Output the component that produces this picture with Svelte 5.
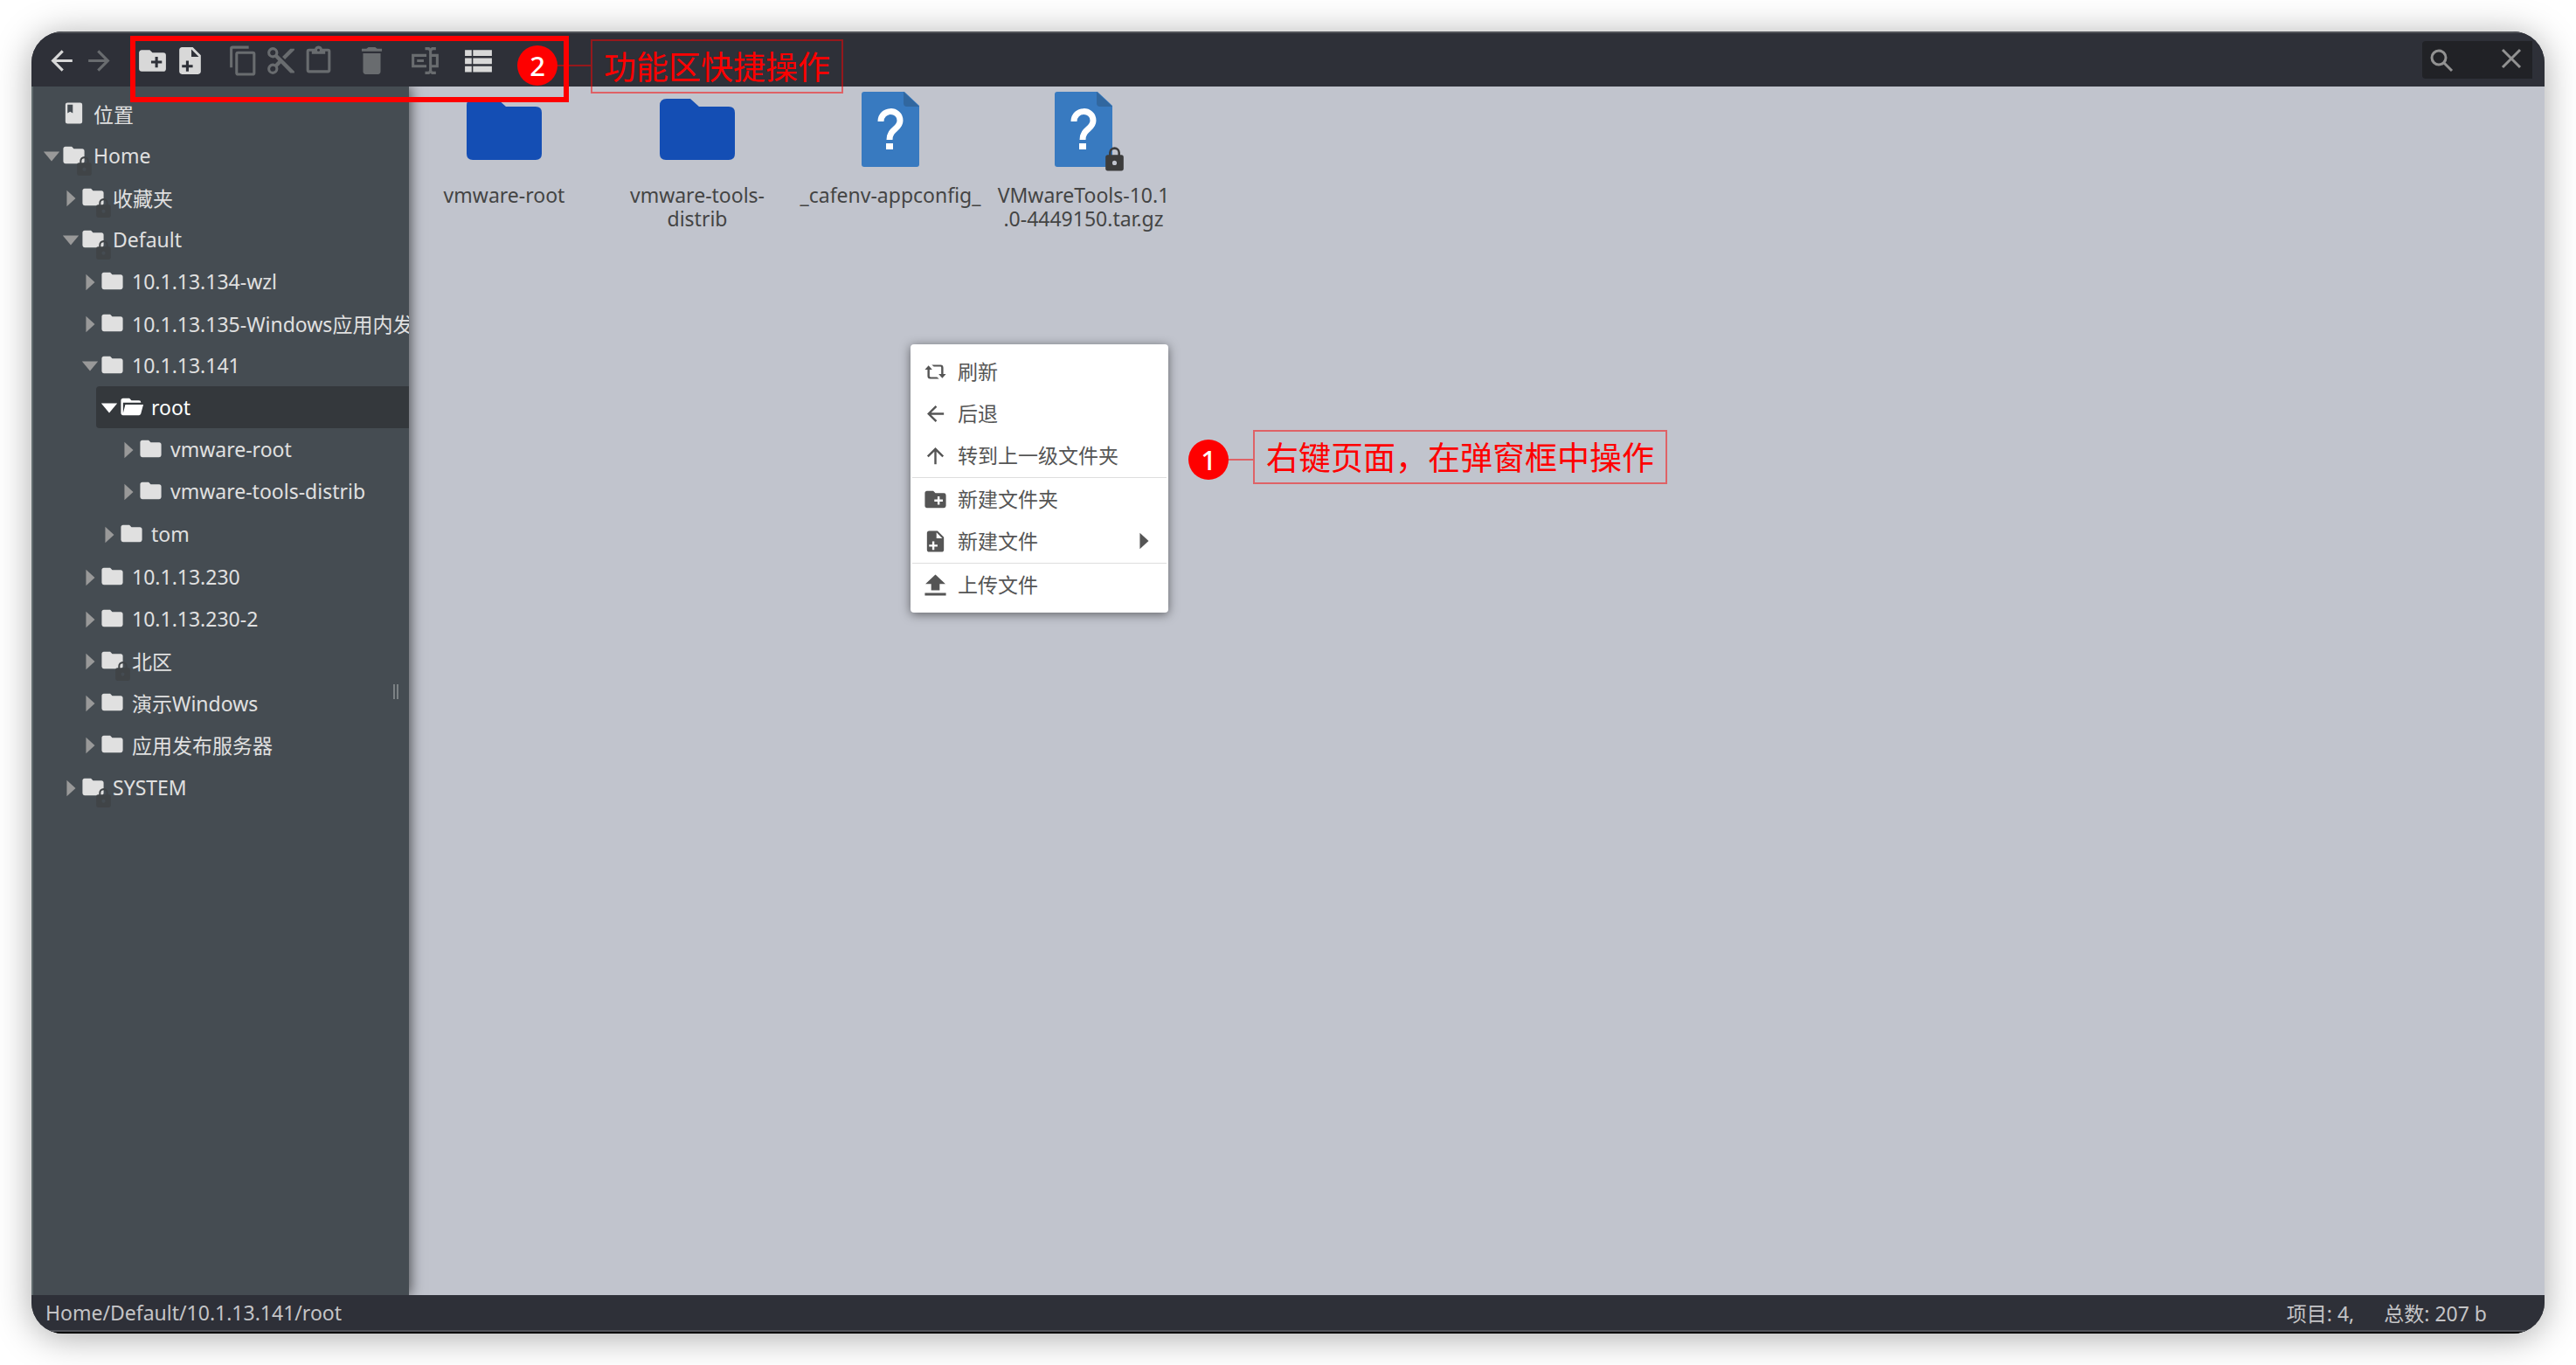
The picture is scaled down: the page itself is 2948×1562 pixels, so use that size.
<script>
  const icons = {
    back: 'M20 11V13H8L13.5 18.5L12.08 19.92L4.16 12L12.08 4.08L13.5 5.5L8 11H20Z',
    forward: 'M4 11V13H16L10.5 18.5L11.92 19.92L19.84 12L11.92 4.08L10.5 5.5L16 11H4Z',
    up: 'M13 20H11V8L5.5 13.5L4.08 12.08L12 4.16L19.92 12.08L18.5 13.5L13 8V20Z',
    folder: 'M10 4H4C2.89 4 2 4.89 2 6V18A2 2 0 0 0 4 20H20A2 2 0 0 0 22 18V8C22 6.89 21.1 6 20 6H12L10 4Z',
    folderOpen: 'M19 20H4C2.89 20 2 19.1 2 18V6C2 4.89 2.89 4 4 4H10L12 6H19A2 2 0 0 1 21 8H4V18L6.14 10H23.21L20.93 18.5C20.7 19.37 19.92 20 19 20Z',
    folderPlus: 'M10 4L12 6H20A2 2 0 0 1 22 8V18A2 2 0 0 1 20 20H4C2.89 20 2 19.1 2 18V6C2 4.89 2.89 4 4 4H10M14 9V12H11V14H14V17H16V14H19V12H16V9H14Z',
    filePlus: 'M14 2H6C4.89 2 4 2.89 4 4V20C4 21.11 4.89 22 6 22H18C19.11 22 20 21.11 20 20V8L14 2M9 12H11V15H14V17H11V20H9V17H6V15H9V12M13 9V3.5L18.5 9H13Z',
    copy: 'M19 21H8V7H19M19 5H8A2 2 0 0 0 6 7V21A2 2 0 0 0 8 23H19A2 2 0 0 0 21 21V7A2 2 0 0 0 19 5M16 1H4A2 2 0 0 0 2 3V17H4V3H16V1Z',
    cut: 'M19 3L13 9L15 11L22 4V3M6 20A2 2 0 0 1 4 18C4 16.89 4.9 16 6 16A2 2 0 0 1 8 18C8 19.11 7.1 20 6 20M6 8A2 2 0 0 1 4 6C4 4.89 4.9 4 6 4A2 2 0 0 1 8 6C8 7.11 7.1 8 6 8M9.64 7.64C9.87 7.14 10 6.59 10 6A4 4 0 0 0 6 2A4 4 0 0 0 2 6A4 4 0 0 0 6 10C6.59 10 7.14 9.87 7.64 9.64L10 12L7.64 14.36C7.14 14.13 6.59 14 6 14A4 4 0 0 0 2 18A4 4 0 0 0 6 22A4 4 0 0 0 10 18C10 17.41 9.87 16.86 9.64 16.36L12 14L19 21H22V20L9.64 7.64Z',
    paste: 'M19 3H14.82C14.4 1.84 13.3 1 12 1S9.6 1.84 9.18 3H5A2 2 0 0 0 3 5V19A2 2 0 0 0 5 21H19A2 2 0 0 0 21 19V5A2 2 0 0 0 19 3M12 3A1 1 0 0 1 13 4A1 1 0 0 1 12 5A1 1 0 0 1 11 4A1 1 0 0 1 12 3M7 7H17V5H19V19H5V5H7V7Z',
    trash: 'M19.500 3H16L14.500 2H9.500L8 3H4.500V5H19.500M5.500 20A2 2 0 0 0 7.500 22H16.500A2 2 0 0 0 18.500 20V6.500H5.500Z',
    rename: 'M17 7H22V17H17V19A1 1 0 0 0 18 20H20V22H17.5C16.95 22 16 21.55 16 21C16 21.55 15.05 22 14.5 22H12V20H14A1 1 0 0 0 15 19V5A1 1 0 0 0 14 4H12V2H14.5C15.05 2 16 2.45 16 3C16 2.45 16.95 2 17.5 2H20V4H18A1 1 0 0 0 17 5V7M2 7H13V9H4V15H13V17H2V7M20 15V9H17V15H20M6 11H11V13H6V11Z',
    list: 'M2 4H7V8.5H2ZM8 4H22V8.5H8ZM2 10H7V14.5H2ZM8 10H22V14.5H8ZM2 16H7V20.5H2ZM8 16H22V20.5H8Z',
    book: 'M18 2H6A2 2 0 0 0 4 4V20A2 2 0 0 0 6 22H18A2 2 0 0 0 20 20V4A2 2 0 0 0 18 2M6 4H11V12L8.5 10.5L6 12V4Z',
    lock: 'M12 17A2 2 0 0 0 14 15C14 13.89 13.1 13 12 13A2 2 0 0 0 10 15A2 2 0 0 0 12 17M18 8A2 2 0 0 1 20 10V20A2 2 0 0 1 18 22H6A2 2 0 0 1 4 20V10C4 8.89 4.9 8 6 8H7V6A5 5 0 0 1 12 1A5 5 0 0 1 17 6V8H18M12 3A3 3 0 0 0 9 6V8H15V6A3 3 0 0 0 12 3Z',
    refresh: 'M5.5 6L9 10H6.500V16C6.500 16.600 6.900 17 7.500 17H13.500L15.500 18.700H7C5.500 18.700 4.500 17.700 4.500 16V10H2L5.500 6M18.500 18L15 14H17.500V8C17.500 7.400 17.100 7 16.500 7H10.500L8.500 5.300H17C18.500 5.300 19.500 6.300 19.500 8V14H22L18.500 18Z',
    upload: 'M8 17V11H2.5L12 2L21.5 11H16V17H8M2 22V19.500H22V22H2Z',
    down: 'M2 6H22L12 18Z',
    right: 'M7 2L18 12L7 22Z'
  };

  const toolGroups = [
    [{ icon: 'back', label: '后退' }, { icon: 'forward', label: '前进', off: true }],
    [{ icon: 'folderPlus', label: '新建文件夹' }, { icon: 'filePlus', label: '新建文件' }],
    [
      { icon: 'copy', label: '复制', off: true },
      { icon: 'cut', label: '剪切', off: true },
      { icon: 'paste', label: '粘贴', off: true }
    ],
    [{ icon: 'trash', label: '删除', off: true }],
    [{ icon: 'rename', label: '重命名', off: true }],
    [{ icon: 'list', label: '列表视图' }]
  ];

  const tree = [
    {
      name: 'Home', locked: true, children: [
        { name: '收藏夹', locked: true },
        {
          name: 'Default', locked: true, children: [
            { name: '10.1.13.134-wzl' },
            { name: '10.1.13.135-Windows应用内发' },
            {
              name: '10.1.13.141', children: [
                { name: 'root', selected: true, children: [{ name: 'vmware-root' }, { name: 'vmware-tools-distrib' }] },
                { name: 'tom' }
              ]
            },
            { name: '10.1.13.230' },
            { name: '10.1.13.230-2' },
            { name: '北区', locked: true },
            { name: '演示Windows' },
            { name: '应用发布服务器' }
          ]
        },
        { name: 'SYSTEM', locked: true }
      ]
    }
  ];

  const files = [
    { name: 'vmware-root', folder: true },
    { name: 'vmware-tools-\ndistrib', folder: true },
    { name: '_cafenv-appconfig_' },
    { name: 'VMwareTools-10.1\n.0-4449150.tar.gz', locked: true }
  ];

  const menuGroups = [
    [{ icon: 'refresh', label: '刷新' }, { icon: 'back', label: '后退' }, { icon: 'up', label: '转到上一级文件夹' }],
    [{ icon: 'folderPlus', label: '新建文件夹' }, { icon: 'filePlus', label: '新建文件', more: true }],
    [{ icon: 'upload', label: '上传文件' }]
  ];
</script>

{#snippet icon(name)}
  <svg class="icon" viewBox="0 0 24 24" aria-hidden="true"><path fill-rule="evenodd" d={icons[name]} /></svg>
{/snippet}

{#snippet branch(nodes)}
  <ul>
    {#each nodes as node}
      <li>
        <button class="node" class:selected={node.selected}>
          <span class="arrow">{@render icon(node.children ? 'down' : 'right')}</span>
          <span class="glyph">
            {@render icon(node.selected ? 'folderOpen' : 'folder')}
            {#if node.locked}<span class="lock">{@render icon('lock')}</span>{/if}
          </span>
          <span class="name">{node.name}</span>
        </button>
        {#if node.children}{@render branch(node.children)}{/if}
      </li>
    {/each}
  </ul>
{/snippet}

<div class="desktop">
  <div class="window">
    <header>
      {#each toolGroups as group}
        <div class="tools">
          {#each group as tool}
            <button class="tool" disabled={tool.off} aria-label={tool.label}>{@render icon(tool.icon)}</button>
          {/each}
        </div>
      {/each}
      <form class="search">
        <button type="button" aria-label="搜索">
          <svg class="stroke" viewBox="0 0 28 28"><circle cx="11" cy="11" r="8" /><path d="M17 17L26 26" /></svg>
        </button>
        <input type="text" aria-label="搜索内容" />
        <button type="button" aria-label="关闭">
          <svg class="stroke" viewBox="0 0 28 28"><path d="M4 2L24 22M24 2L4 22" /></svg>
        </button>
      </form>
    </header>

    <div class="body">
      <nav>
        <button class="node">
          <span class="arrow"></span>
          <span class="glyph">{@render icon('book')}</span>
          <span class="name">位置</span>
        </button>
        {@render branch(tree)}
        <span class="grip"></span>
      </nav>

      <main>
        {#each files as file}
          <button class="file">
            <span class="thumb">
              {#if file.folder}
                <svg viewBox="0 0 96 96"><path fill="#144eb4" d="M5 21Q5 13 13 13H40L50 22H84Q91 22 91 29V76Q91 83 84 83H12Q5 83 5 76Z" /></svg>
              {:else}
                <svg viewBox="0 0 96 96">
                  <path fill="#387ac0" d="M18 5H64L81 21V88Q81 91 78 91H18Q15 91 15 88V8Q15 5 18 5Z" />
                  <path fill="#31679f" d="M63 5L81 22H67Q63 22 63 18Z" />
                  <path fill="none" stroke="#fff" stroke-width="7" d="M37 39C37 24 59 24 59 38C59 48 47 47 47 60" />
                  <path fill="#fff" d="M43 64H51V71H43Z" />
                </svg>
              {/if}
              {#if file.locked}<span class="file-lock">{@render icon('lock')}</span>{/if}
            </span>
            <span class="label">{file.name}</span>
          </button>
        {/each}
      </main>
    </div>

    <footer>
      <span class="path">Home/Default/10.1.13.141/root</span>
      <span>项目: 4,</span>
      <span>总数: 207 b</span>
    </footer>
  </div>

  <div class="menu" role="menu">
    {#each menuGroups as group}
      <div class="section">
        {#each group as item}
          <button role="menuitem">
            {@render icon(item.icon)}
            <span class="item">{item.label}</span>
            {#if item.more}<span class="more">{@render icon('right')}</span>{/if}
          </button>
        {/each}
      </div>
    {/each}
  </div>

  <div class="frame"></div>
  <div class="callout second"><div class="pin"><b>2</b><i></i></div><p>功能区快捷操作</p></div>
  <div class="callout first"><div class="pin"><b>1</b><i></i></div><p>右键页面，在弹窗框中操作</p></div>
</div>

<style>
  :global(body) {
    background: #fff;
  }
  .desktop {
    position: relative;
    box-sizing: border-box;
    height: 100vh;
    padding: 36px;
    overflow: hidden;
    font-family: 'Noto Sans', 'Noto Sans CJK SC', sans-serif;
    font-size: 23px;
  }
  .window {
    display: flex;
    flex-direction: column;
    height: 100%;
    border-radius: 36px;
    overflow: hidden;
    background: #2e3038;
    box-shadow: 0 4px 40px rgba(0, 0, 0, 0.34);
  }
  button {
    padding: 0;
    border: 0;
    background: none;
    color: inherit;
    font: inherit;
  }
  .icon {
    display: block;
    flex: none;
    fill: currentColor;
  }
  header {
    display: flex;
    align-items: center;
    gap: 18px;
    box-sizing: border-box;
    height: 63px;
    padding: 2px 14px 0 13px;
    border-top: 2px solid #505257;
    background: #2e3038;
    color: #d8d8d8;
  }
  .tools {
    display: flex;
  }
  .tool {
    display: flex;
    justify-content: center;
    width: 43px;
  }
  .tool .icon {
    width: 37px;
  }
  .tool:disabled {
    color: #696c6f;
  }
  .search {
    display: flex;
    align-items: center;
    box-sizing: border-box;
    width: 126px;
    height: 43px;
    margin: 0 0 2px auto;
    padding: 0 10px 0 8px;
    border-radius: 4px 0 0 4px;
    background: #212226;
  }
  .search button {
    display: flex;
  }
  .search input {
    flex: 1;
    min-width: 0;
    padding: 0;
    border: 0;
    outline: 0;
    background: transparent;
    color: #d8d8d8;
    font: inherit;
  }
  .stroke {
    width: 28px;
    height: 28px;
    fill: none;
    stroke: #929292;
    stroke-width: 3;
  }
  .body {
    display: flex;
    flex: 1;
    min-height: 0;
  }
  nav {
    position: relative;
    z-index: 1;
    flex: none;
    box-sizing: border-box;
    width: 432px;
    padding: 7px 0 0 6px;
    border-left: 2px solid #606b6e;
    background: #454c52;
    color: #e0e0e0;
    box-shadow: 2px 0 14px rgba(0, 0, 0, 0.6);
    clip-path: inset(0 -24px 0 0);
  }
  ul {
    margin: 0;
    padding: 0;
    list-style: none;
  }
  ul ul {
    padding: 0 0 1px 22px;
  }
  .node {
    display: flex;
    align-items: center;
    width: 100%;
    height: 48px;
    border-radius: 4px 0 0 4px;
    overflow: hidden;
    text-align: left;
    white-space: nowrap;
  }
  .node.selected {
    background: #34383c;
    color: #fff;
  }
  .arrow {
    flex: none;
    width: 22px;
    margin: 2px 0 0 4px;
    color: #999;
  }
  .selected .arrow {
    color: #fff;
  }
  .glyph {
    position: relative;
    flex: none;
    width: 29px;
    margin: 0 8px 2px 0;
  }
  .lock {
    position: absolute;
    top: 15px;
    left: 14px;
    width: 25px;
    color: #404447;
  }
  .grip {
    position: absolute;
    top: 50%;
    right: 12px;
    width: 2px;
    height: 17px;
    margin-top: -8px;
    border: solid #7b8184;
    border-width: 0 2px;
  }
  main {
    display: flex;
    flex: 1;
    flex-wrap: wrap;
    align-content: flex-start;
    align-items: flex-start;
    gap: 11px;
    min-width: 0;
    padding: 1px 4px;
    background: #c1c4cd;
    color: #444;
  }
  .file {
    display: flex;
    flex-direction: column;
    align-items: center;
    gap: 14px;
    width: 210px;
    line-height: 27px;
  }
  .thumb {
    position: relative;
    width: 96px;
    height: 96px;
  }
  .label {
    white-space: pre;
  }
  .file-lock {
    position: absolute;
    right: -3px;
    bottom: -2px;
    width: 31px;
    color: #3c3c3c;
  }
  footer {
    display: flex;
    align-items: center;
    gap: 34px;
    box-sizing: border-box;
    height: 44px;
    padding: 0 66px 2px 16px;
    border-bottom: 2px solid #000;
    box-shadow: inset 0 -2px #515359;
    background: #2e3038;
    color: #c4c4c6;
  }
  .path {
    margin-right: auto;
  }
  .menu {
    position: absolute;
    top: 394px;
    left: 1042px;
    box-sizing: border-box;
    width: 295px;
    padding: 8px 2px 7px;
    border-radius: 4px;
    background: #fff;
    color: #555;
    box-shadow: 0 2px 12px rgba(0, 0, 0, 0.5);
  }
  .section + .section {
    padding-top: 1px;
    border-top: 1px solid #dedede;
  }
  .menu button {
    display: flex;
    align-items: center;
    gap: 11px;
    box-sizing: border-box;
    width: 100%;
    height: 48px;
    padding: 0 15px 2px 12px;
  }
  .item {
    padding-bottom: 2px;
  }
  .menu .icon {
    width: 29px;
  }
  .menu .more {
    margin-left: auto;
  }
  .menu .more .icon {
    width: 22px;
  }
  .frame {
    position: absolute;
    z-index: 2;
    top: 41px;
    left: 149px;
    box-sizing: border-box;
    width: 502px;
    height: 76px;
    border: 6px solid #fe0000;
  }
  .callout {
    position: absolute;
    z-index: 3;
    display: flex;
    align-items: flex-start;
    color: #fe0000;
    font-family: 'Noto Sans CJK SC', sans-serif;
    white-space: nowrap;
  }
  .second {
    top: 45px;
    left: 592px;
  }
  .first {
    top: 492px;
    left: 1360px;
  }
  .pin {
    display: flex;
    align-items: center;
    padding-top: 7px;
  }
  .first .pin {
    padding-top: 11px;
  }
  .pin b {
    width: 46px;
    border-radius: 50%;
    background: #fe0000;
    color: #fff;
    font-family: 'Noto Sans', sans-serif;
    font-size: 31px;
    font-weight: 500;
    line-height: 46px;
    text-align: center;
  }
  .pin i {
    width: 38px;
    height: 2px;
    background: rgba(254, 0, 0, 0.5);
  }
  .first i {
    width: 28px;
  }
  .callout p {
    margin: 0;
    padding: 0 13px 2px;
    border: 2px solid rgba(254, 0, 0, 0.5);
    font-size: 37px;
    line-height: 56px;
  }
</style>
